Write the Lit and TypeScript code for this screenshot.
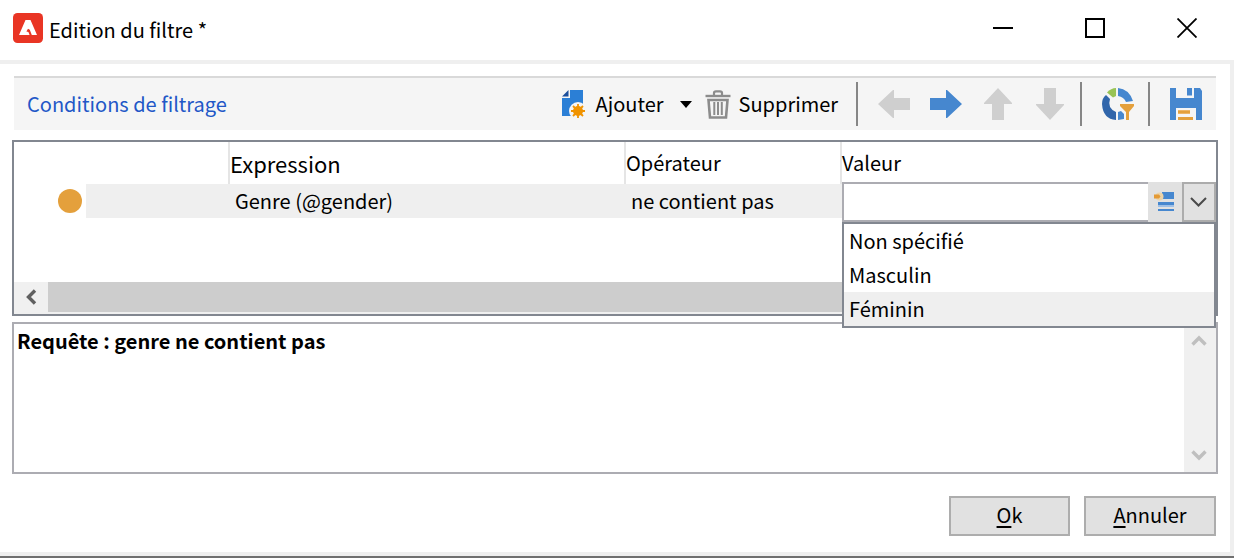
import { LitElement, html, css, svg } from "lit";
import { customElement, state } from "lit/decorators.js";

const logo = svg`<svg class="logo" viewBox="0 0 30 30" width="30" height="30" aria-hidden="true">
  <rect width="30" height="30" rx="4.500" fill="#e93524"/>
  <path fill="#fff" fill-rule="evenodd" d="M12.500 7h5L24 22h-5.200l-2-5.300-1.800-1-1.600 2.800 2 .6 1.200 2.900H6z"/>
</svg>`;

const newDoc = svg`<svg width="24" height="28" viewBox="0 0 24 28" aria-hidden="true">
  <path fill="#2b7fd6" d="M8 0h13v26H0V8h8z"/>
  <path fill="#1b4f9c" d="M0 6.5 6.5 0v6.5z"/>
  <circle cx="16" cy="21" r="9" fill="#f5f5f5"/>
  <path stroke="#f09300" stroke-width="1.800" d="M16 14v14M9 21h14M11 16l10 10M21 16 11 26"/>
  <circle cx="16" cy="21" r="5" fill="#f09300"/>
</svg>`;

const trash = svg`<svg width="26" height="29" viewBox="0 0 26 29" fill="none" stroke="#8c8c8c" aria-hidden="true">
  <path stroke-width="2.400" d="M0.500 6h25"/>
  <path stroke-width="2.200" d="M9 5V3Q9 1.300 11 1.300h4Q17 1.300 17 3v2"/>
  <path stroke-width="2.600" d="M3.500 10h19l-1.500 17.500H5z"/>
  <path stroke-width="2" d="M9.300 12v13M13 12v13M16.800 12v13"/>
</svg>`;

const arrow = (kind: string) => {
  const paths: Record<string, string> = {
    left: "M0 16 15 2h1v8h16v12H16v8h-1z",
    right: "M32 16 17 2h-1v8H0v12h16v8h1z",
    up: "M16 0 2 15v1h8v16h12V16h8v-1z",
    down: "M16 32 2 17v-1h8V0h12v16h8v1z",
  };
  return svg`<svg width="32" height="32" viewBox="0 0 32 32" aria-hidden="true">
    <path fill=${kind === "right" ? "#4687cf" : "#cfcfcf"} d=${paths[kind]}/></svg>`;
};

const cycle = svg`<svg width="32" height="32" viewBox="0 0 32 32" aria-hidden="true">
  <path fill="#98c355" d="M14 0v8L11 9.500 5 4.500Q9 0 14 0z"/>
  <path fill="#4687cf" d="M16 0Q27 1 31 13l-7 1Q22 9 16 8z"/>
  <path fill="#3166ab" d="M4 7l4 4Q5 20 14 24v8Q1 31 0 16 0 10 4 7z"/>
  <path fill="#4687cf" d="M16 24l3-1 3 3v5l-6 1z"/>
  <path fill="#e4a03c" d="M18 16h14v2l-5 6v8h-3v-8l-6-6z"/>
</svg>`;

const disk = svg`<svg width="32" height="32" viewBox="0 0 32 32" aria-hidden="true">
  <path fill="#4687cf" d="M0 0h6v10h18V0h6l2 3v29h-6V20H6v12H0z"/>
  <path fill="#4687cf" d="M17 0h5v7.500h-5z"/>
  <path fill="#edb566" d="M8 22h12v4H8z"/>
  <path fill="#e4a03c" d="M8 23h12v2H8zM8 29h15v3H8z"/>
</svg>`;

const picker = svg`<svg width="22" height="20" viewBox="0 0 22 20" aria-hidden="true">
  <path fill="#4687cf" d="M8 0h12v7H8zM4 10h16v3H4zM4 17h16v2H4z"/>
  <path fill="#9dbfe6" d="M4 13h16v2H4z"/>
  <circle cx="5.500" cy="4.500" r="4" fill="#ecd3a8"/>
  <path fill="#e49a35" d="M0 2.500h5l1.500 2-1.500 2H0z"/>
</svg>`;

const chevron = (d: string, color: string, width: number) => svg`<svg width="18" height="18"
  viewBox="0 0 18 18" fill="none" stroke=${color} stroke-width=${width} aria-hidden="true"><path d=${d}/></svg>`;

@customElement("app-root")
export class AppRoot extends LitElement {
  @state() private options = ["Non spécifié", "Masculin", "Féminin"];
  @state() private active = 2;

  static styles = css`
    :host {
      display: block;
      background: #fff;
      color: #000;
      font: 20px/28px "Noto Sans CJK SC", "Open Sans", sans-serif;
    }
    * { box-sizing: border-box; }
    svg { display: block; flex: none; }
    button, input, select { font: inherit; color: inherit; margin: 0; padding: 0; border-radius: 0; }
    button { background: none; border: 0; display: flex; align-items: center; justify-content: center; }
    .window { border-bottom: 2px solid #707070; }
    .titlebar { display: flex; align-items: center; height: 60px; padding: 0 34px 4px 13px; gap: 6px; }
    .title { flex: 1; margin: 0; padding-top: 4px; font-size: 20px; font-weight: 400; }
    .controls { display: flex; gap: 66px; }
    .controls button { width: 26px; height: 26px; }
    .client {
      border: 4px solid #efefef;
      border-left: 0;
      padding: 12px 12px 16px 12px;
    }
    .toolbar {
      display: flex;
      align-items: center;
      height: 54px;
      margin: 0 2px 10px;
      padding: 0 14px 0 13px;
      background: #f5f5f5;
      border-top: 2px solid #d9d9d9;
    }
    .heading { flex: 1; margin: 0; font-size: 20px; font-weight: 400; color: #2257c7; }
    .tool { gap: 10px; }
    .caret { width: 14px; height: 28px; margin: 0 12px 0 15px; }
    .delete { gap: 8px; }
    .sep { width: 2px; height: 44px; margin: 0 20px 0 18px; background: #868686; }
    .arrows { display: flex; gap: 20px; }
    .sep.near { margin-left: 14px; }
    .grid { border: 2px solid #828790; height: 176px; display: flex; flex-direction: column; }
    table { width: 100%; table-layout: fixed; border-collapse: separate; border-spacing: 0; }
    th, td { padding: 0; text-align: left; font-weight: 400; white-space: nowrap; }
    th { height: 42px; border-right: 2px solid #e5e5e5; }
    th:last-child { border-right: 0; }
    th.main { font-size: 22px; }
    td { height: 34px; background: #efefef; padding-left: 5px; }
    .c-dot { width: 72px; }
    .c-pad { width: 144px; }
    .c-expr { width: 396px; }
    .c-op { width: 216px; }
    td.mark { background: none; padding: 0 4px 0 0; }
    .dot { width: 24px; height: 24px; margin-left: auto; border-radius: 50%; background: #e4a03c; }
    td.value { padding: 0; background: none; }
    .combo { position: relative; display: flex; height: 40px; margin: -2px 0 -4px; }
    .combo input {
      flex: 1;
      min-width: 0;
      padding: 0 6px;
      border: 2px solid #acacb2;
      border-right: 0;
      background: #fff;
      outline: 0;
    }
    .combo button { width: 34px; background: #e1e1e1; }
    .combo .drop { border: 2px solid #acacac; }
    .list {
      position: absolute;
      z-index: 1;
      top: 40px;
      left: 0;
      width: 100%;
      height: 106px;
      border: 2px solid #828790;
      background: #fff;
      overflow: hidden;
      outline: 0;
    }
    .list option { height: 34px; padding: 2px 5px; line-height: 28px; min-height: 34px; }
    .list option.active { background: #efefef; }
    .hscroll { display: flex; margin-top: auto; height: 32px; background: #f0f0f0; }
    .hscroll button { width: 32px; margin-right: 2px; height: 30px; }
    .thumb { flex: 1; height: 30px; background: #cdcdcd; }
    .query { display: flex; height: 152px; margin-top: 6px; border: 2px solid #acacb2; }
    .query p { flex: 1; margin: 0; padding: 3px; font-weight: 700; }
    .vscroll { display: flex; flex-direction: column; justify-content: space-between; width: 32px; background: #f0f0f0; }
    .vscroll button { height: 34px; width: 30px; }
    .actions { display: flex; justify-content: flex-end; gap: 14px; margin: 22px 2px 0; }
    .actions button { height: 40px; padding-bottom: 2px; border: 2px solid #adadad; background: #e1e1e1; display: block; }
    .ok { width: 121px; }
    .cancel { width: 132px; }
    u { text-underline-offset: 3px; text-decoration-thickness: 2px; }
  `;

  render() {
    return html`
      <div class="window">
        <header class="titlebar">
          ${logo}
          <h1 class="title">Edition du filtre *</h1>
          <div class="controls">
            <button aria-label="Réduire"><svg width="20" height="20" viewBox="0 0 20 20"><path d="M0 10h20" stroke="#000" stroke-width="2"/></svg></button>
            <button aria-label="Agrandir"><svg width="20" height="20" viewBox="0 0 20 20"><path d="M1 1h18v18H1z" fill="none" stroke="#000" stroke-width="2"/></svg></button>
            <button aria-label="Fermer"><svg width="20" height="20" viewBox="0 0 20 20"><path d="M0.500 0.500l19 19M19.500 0.500l-19 19" stroke="#000" stroke-width="1.800"/></svg></button>
          </div>
        </header>
        <main class="client">
          <div class="toolbar">
            <h2 class="heading">Conditions de filtrage</h2>
            <button class="tool">${newDoc}<span>Ajouter</span></button>
            <button class="caret" aria-label="Options d'ajout"><svg width="12" height="7" viewBox="0 0 12 7"><path d="M0 0h12L6 7z"/></svg></button>
            <button class="tool delete">${trash}<span>Supprimer</span></button>
            <span class="sep"></span>
            <div class="arrows">
              <button aria-label="Gauche" disabled>${arrow("left")}</button>
              <button aria-label="Droite">${arrow("right")}</button>
              <button aria-label="Monter" disabled>${arrow("up")}</button>
              <button aria-label="Descendre" disabled>${arrow("down")}</button>
            </div>
            <span class="sep near"></span>
            <button aria-label="Actualiser le filtre">${cycle}</button>
            <span class="sep near"></span>
            <button aria-label="Enregistrer">${disk}</button>
          </div>
          <section class="grid">
            <table>
              <colgroup><col class="c-dot"><col class="c-pad"><col class="c-expr"><col class="c-op"><col></colgroup>
              <thead>
                <tr><th colspan="2"></th><th class="main">Expression</th><th>Opérateur</th><th>Valeur</th></tr>
              </thead>
              <tbody>
                <tr>
                  <td class="mark"><div class="dot"></div></td>
                  <td></td>
                  <td>Genre (@gender)</td>
                  <td>ne contient pas</td>
                  <td class="value">
                    <div class="combo">
                      <input type="text" aria-label="Valeur">
                      <button aria-label="Choisir une valeur">${picker}</button>
                      <button class="drop" aria-label="Ouvrir la liste">${chevron("M1 5l7.500 7.500L16 5", "#4a4a4a", 2)}</button>
                      <select class="list" size="3" aria-label="Valeurs possibles">
                        ${this.options.map((o, i) => html`<option class=${i === this.active ? "active" : ""}>${o}</option>`)}
                      </select>
                    </div>
                  </td>
                </tr>
              </tbody>
            </table>
            <div class="hscroll">
              <button aria-label="Défiler à gauche">${chevron("M14 2.500L7.500 9l6.500 6.500", "#606060", 3.4)}</button>
              <div class="thumb"></div>
            </div>
          </section>
          <section class="query">
            <p>Requête : genre ne contient pas</p>
            <div class="vscroll">
              <button aria-label="Défiler vers le haut">${chevron("M2.500 12.500L9 6l6.500 6.500", "#bfbfbf", 3.4)}</button>
              <button aria-label="Défiler vers le bas">${chevron("M2.500 5.500L9 12l6.500-6.500", "#bfbfbf", 3.4)}</button>
            </div>
          </section>
          <div class="actions">
            <button class="ok"><u>O</u>k</button>
            <button class="cancel"><u>A</u>nnuler</button>
          </div>
        </main>
      </div>
    `;
  }
}
